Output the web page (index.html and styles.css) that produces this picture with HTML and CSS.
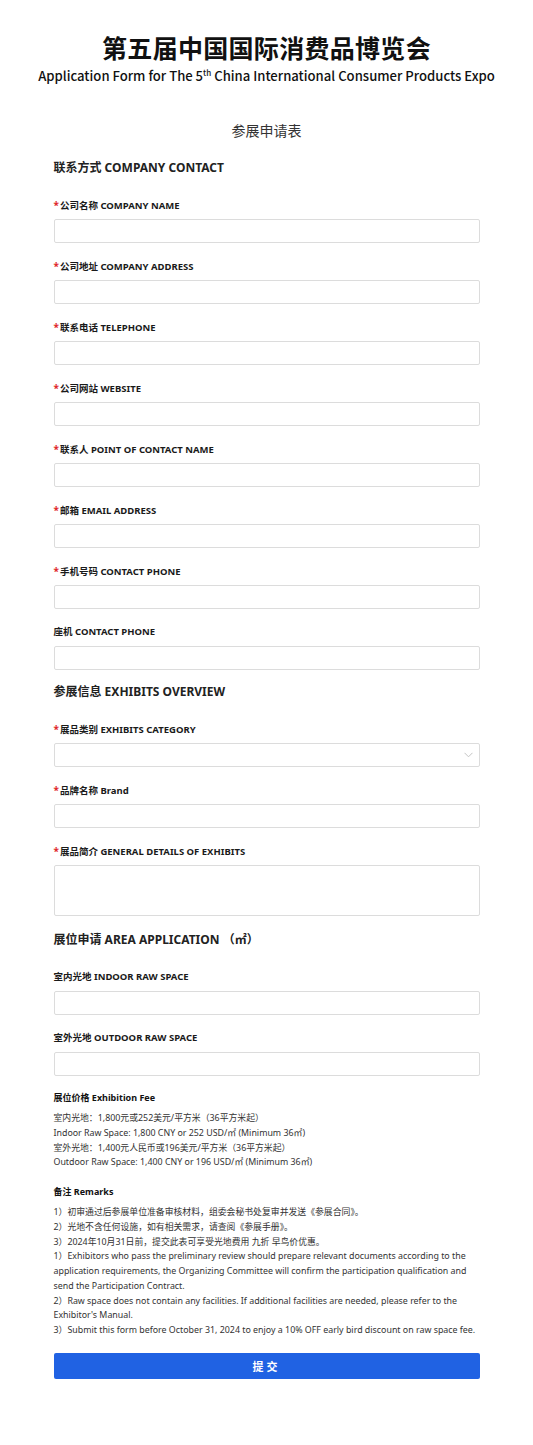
FILE: index.html
```html
<!DOCTYPE html>
<html lang="zh-CN">
<head>
    <meta charset="UTF-8">
    <meta name="viewport" content="width=device-width, initial-scale=1.0">
    <title>参展申请表</title>
    <link rel="stylesheet" href="styles.css">
</head>
<body>
    <div class="banner">
        <h1>第五届中国国际消费品博览会</h1>
        <p class="sub">Application Form for The 5<sup>th</sup> China International Consumer Products Expo</p>
    </div>

    <form class="apply">
        <h2 class="form-title">参展申请表</h2>

        <h3 class="sec">联系方式 COMPANY CONTACT</h3>
        <div class="field">
            <label><span class="req">*</span>公司名称 COMPANY NAME</label>
            <input type="text">
        </div>
        <div class="field">
            <label><span class="req">*</span>公司地址 COMPANY ADDRESS</label>
            <input type="text">
        </div>
        <div class="field">
            <label><span class="req">*</span>联系电话 TELEPHONE</label>
            <input type="text">
        </div>
        <div class="field">
            <label><span class="req">*</span>公司网站 WEBSITE</label>
            <input type="text">
        </div>
        <div class="field">
            <label><span class="req">*</span>联系人 POINT OF CONTACT NAME</label>
            <input type="text">
        </div>
        <div class="field">
            <label><span class="req">*</span>邮箱 EMAIL ADDRESS</label>
            <input type="text">
        </div>
        <div class="field">
            <label><span class="req">*</span>手机号码 CONTACT PHONE</label>
            <input type="text">
        </div>
        <div class="field">
            <label>座机 CONTACT PHONE</label>
            <input type="text">
        </div>

        <h3 class="sec">参展信息 EXHIBITS OVERVIEW</h3>
        <div class="field">
            <label><span class="req">*</span>展品类别 EXHIBITS CATEGORY</label>
            <div class="select-wrap">
                <select></select>
                <svg class="arrow" width="9" height="6" viewBox="0 0 9 6"><path d="M0.5 0.8 L4.5 4.8 L8.5 0.8" fill="none" stroke="#c4c4c4" stroke-width="1"/></svg>
            </div>
        </div>
        <div class="field">
            <label><span class="req">*</span>品牌名称 Brand</label>
            <input type="text">
        </div>
        <div class="field">
            <label><span class="req">*</span>展品简介 GENERAL DETAILS OF EXHIBITS</label>
            <textarea></textarea>
        </div>

        <h3 class="sec sec-3">展位申请 AREA APPLICATION （㎡）</h3>
        <div class="field">
            <label>室内光地 INDOOR RAW SPACE</label>
            <input type="text">
        </div>
        <div class="field">
            <label>室外光地 OUTDOOR RAW SPACE</label>
            <input type="text">
        </div>

        <div class="note fee">
            <h4>展位价格 Exhibition Fee</h4>
            <p>室内光地：1,800元或252美元/平方米（36平方米起）<br>
            Indoor Raw Space: 1,800 CNY or 252 USD/㎡ (Minimum 36㎡)<br>
            室外光地：1,400元人民币或196美元/平方米（36平方米起）<br>
            Outdoor Raw Space: 1,400 CNY or 196 USD/㎡ (Minimum 36㎡)</p>
        </div>

        <div class="note remarks">
            <h4>备注 Remarks</h4>
            <p>1）初审通过后参展单位准备审核材料，组委会秘书处复审并发送《参展合同》。<br>
            2）光地不含任何设施，如有相关需求，请查阅《参展手册》。<br>
            3）2024年10月31日前，提交此表可享受光地费用 九折 早鸟价优惠。<br>
            1）Exhibitors who pass the preliminary review should prepare relevant documents according to the application requirements, the Organizing Committee will confirm the participation qualification and send the Participation Contract.<br>
            2）Raw space does not contain any facilities. If additional facilities are needed, please refer to the Exhibitor's Manual.<br>
            3）Submit this form before October 31, 2024 to enjoy a 10% OFF early bird discount on raw space fee.</p>
        </div>

        <button type="button" class="btn">提交</button>
    </form>
</body>
</html>
```

FILE: styles.css
```css
*{
    margin: 0;
    padding: 0;
    box-sizing: border-box;
}
body {
    background-color: #fff;
    color: #222;
    font-family: 'Noto Sans', 'Noto Sans CJK SC', sans-serif;
    padding: 32px 0 67px;
}
.banner {
    text-align: center;
    font-family: 'Noto Sans CJK SC', sans-serif;
    color: #111;
}
.banner h1 {
    font-size: 25px;
    line-height: 30px;
    font-weight: bold;
    letter-spacing: 0.3px;
}
.banner .sub {
    margin-top: 5px;
    font-size: 13.1px;
    line-height: 18px;
    font-weight: 500;
}
.banner sup {
    font-size: 8px;
    vertical-align: 5px;
    line-height: 0;
}
.apply {
    width: 426px;
    margin: 35px auto 0;
}
.form-title {
    text-align: center;
    font-family: 'Noto Sans CJK SC', sans-serif;
    font-size: 14px;
    line-height: 20px;
    font-weight: normal;
    color: #333;
}
.sec {
    height: 18px;
    margin-top: 13px;
    margin-bottom: 22px;
    font-size: 12px;
    line-height: 18px;
    font-weight: bold;
    color: #222;
}
.form-title + .sec {
    margin-top: 19px;
}
.sec-3 {
    margin-top: 15px;
}
.field + .field {
    margin-top: 17px;
}
.field label {
    display: block;
    height: 12px;
    font-size: 9.5px;
    line-height: 12px;
    font-weight: bold;
    margin-bottom: 8px;
    color: #1a1a1a;
    white-space: nowrap;
}
.req {
    color: #e0262a;
    margin-right: 1px;
    font-size: 10px;
}
.field input,
.field select,
.field textarea {
    display: block;
    width: 100%;
    height: 24px;
    border: 1px solid #dcdcdc;
    border-radius: 2px;
    background: #fff;
    outline: none;
    font-size: 10px;
}
.field textarea {
    height: 51px;
    resize: none;
}
.select-wrap {
    position: relative;
}
.field select {
    appearance: none;
    -webkit-appearance: none;
}
.arrow {
    position: absolute;
    right: 7px;
    top: 9px;
}
.note h4 {
    height: 12px;
    font-size: 9px;
    line-height: 12px;
    font-weight: bold;
    color: #111;
}
.note p {
    font-size: 8.85px;
    line-height: 14.75px;
    color: #333;
}
.fee {
    margin-top: 16px;
}
.fee h4 {
    margin-bottom: 7px;
}
.remarks {
    margin-top: 16px;
}
.remarks h4 {
    margin-bottom: 7px;
}
.btn {
    display: block;
    width: 100%;
    height: 26px;
    margin-top: 15px;
    border: none;
    border-radius: 2px;
    background-color: #2062e3;
    color: #fff;
    font-family: 'Noto Sans CJK SC', sans-serif;
    font-size: 11px;
    font-weight: bold;
    letter-spacing: 3px;
    cursor: pointer;
}
```
